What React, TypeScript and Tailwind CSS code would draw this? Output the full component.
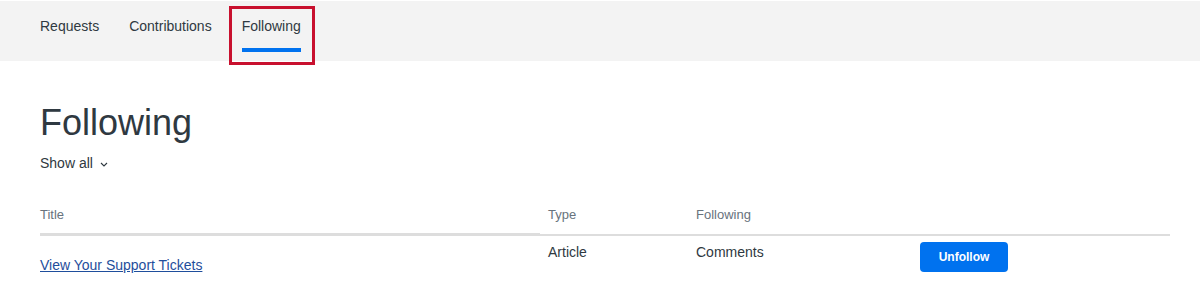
import React from 'react';

const font = { fontFamily: '"Liberation Sans", Arial, sans-serif' };

function Tab({ label, active }: { label: string; active?: boolean }) {
  return (
    <div className="relative flex flex-col pt-[15px]">
      <span className="text-[14px] leading-[20px] text-[#2f3941]">{label}</span>
      {active && <span className="mt-[12px] h-[4px] w-full bg-[#0072ef]" />}
      {active && (
        <span className="absolute left-[-13px] top-[5px] h-[59px] w-[86px] border-[3px] border-[#c8102e]" />
      )}
    </div>
  );
}

export default function App() {
  return (
    <div className="min-h-[294px] bg-white text-[#2f3941]" style={font}>
      {/* Nav */}
      <nav className="h-[61px] border-t border-white bg-[#f3f3f3] px-10">
        <div className="flex items-start gap-[30px]">
          <Tab label="Requests" />
          <Tab label="Contributions" />
          <Tab label="Following" active />
        </div>
      </nav>

      {/* Body */}
      <main className="px-10 pt-[40px]">
        <h1 className="text-[36px] leading-[43px] font-normal text-[#2f3941]">Following</h1>
        <button className="mt-[9px] flex items-center gap-[7px] text-[14px] leading-[20px] text-[#2f3941]">
          Show all
          <svg width="8" height="5" viewBox="0 0 8 5" fill="none" className="mt-[3px]">
            <path d="M1 1l3 3 3-3" stroke="#2f3941" strokeWidth="1.1" />
          </svg>
        </button>

        <div className="mt-[25px] w-[1130px]">
          {/* Header */}
          <div className="grid grid-cols-[500px_148px_224px_1fr] text-[13px] leading-[18px] text-[#68737d]">
            <div className="border-b-[3px] border-[#dddddd] pt-[8px] pb-[9px]">Title</div>
            <div className="border-b-2 border-[#dddddd] pt-[8px] pb-[9px] pl-2">Type</div>
            <div className="border-b-2 border-[#dddddd] pt-[8px] pb-[9px] pl-2">Following</div>
            <div className="border-b-2 border-[#dddddd] pt-[8px] pb-[9px]" />
          </div>

          {/* Row */}
          <div className="grid grid-cols-[500px_148px_224px_1fr] text-[14px] leading-[20px]">
            <div className="pt-[19px]">
              <a href="#" className="text-[#1f4e9c] underline">
                View Your Support Tickets
              </a>
            </div>
            <div className="pt-[6px] pl-2">Article</div>
            <div className="pt-[6px] pl-2">Comments</div>
            <div className="pt-[6px] pl-2">
              <button className="h-[30px] w-[88px] rounded-[4px] bg-[#0072ef] text-[12px] font-bold text-white">
                Unfollow
              </button>
            </div>
          </div>
        </div>
      </main>
    </div>
  );
}
